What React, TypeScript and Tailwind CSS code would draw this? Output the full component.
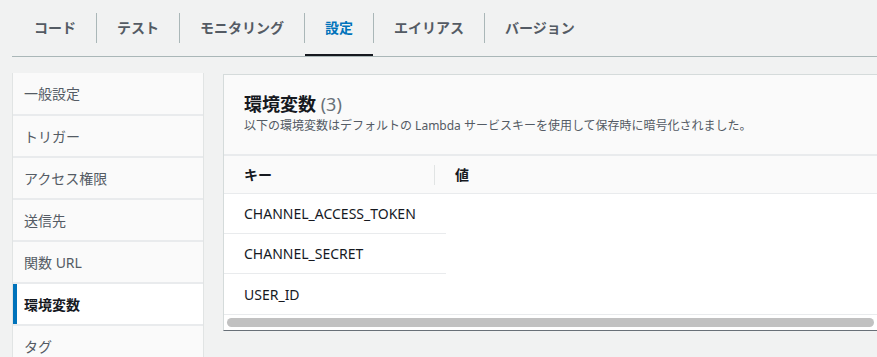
const tabs = ['コード', 'テスト', 'モニタリング', '設定', 'エイリアス', 'バージョン']
const activeTab = '設定'

const menu = ['一般設定', 'トリガー', 'アクセス権限', '送信先', '関数 URL', '環境変数', 'タグ']
const activeMenu = '環境変数'

const envVars = ['CHANNEL_ACCESS_TOKEN', 'CHANNEL_SECRET', 'USER_ID']

export default function App() {
  return (
    <div
      className="h-[357px] w-[877px] overflow-hidden bg-[#f1f2f2] text-[#16191f]"
      style={{ fontFamily: '"Noto Sans", "Noto Sans CJK JP", sans-serif' }}
    >
      {/* Tabs */}
      <div className="ml-3 flex h-[57px] border-b border-[#aab7b8] pl-[2px]">
        {tabs.map((t, i) => (
          <div key={t} className="relative flex h-[56px] items-center">
            {i > 0 && <div className="h-[30px] w-px bg-[#aab7b8]" />}
            <span
              className={`px-5 text-[14px] font-bold leading-none ${
                t === activeTab ? 'text-[#0073bb]' : 'text-[#545b64]'
              }`}
            >
              {t}
            </span>
            {t === activeTab && (
              <div className="absolute bottom-0 left-px right-0 h-[2px] bg-[#16191f]" />
            )}
          </div>
        ))}
      </div>

      <div className="mt-4 flex items-start gap-[19px] pl-3">
        {/* Side menu */}
        <div className="w-[192px] shrink-0 border-x border-[#e1e4e4] bg-[#fafafa]">
          {menu.map((m, i) => {
            const active = m === activeMenu
            return (
              <div
                key={m}
                className={`flex items-center ${
                  i > 0 ? 'h-[42px] border-t-2 border-[#e9ebed]' : 'h-[41px]'
                } ${active ? 'bg-white' : ''}`}
              >
                <div className={`h-full w-[4px] ${active ? 'bg-[#0073bb]' : ''}`} />
                <span
                  className={`pl-[7px] text-[14px] ${
                    active ? 'font-bold text-[#16191f]' : 'text-[#545b64]'
                  }`}
                >
                  {m}
                </span>
              </div>
            )
          })}
        </div>

        {/* Env vars card */}
        <div className="mt-px min-w-0 flex-1 border-l border-t border-[#d5dbdb] border-b border-b-[#687078] bg-white">
          <div className="border-b-2 border-[#e9ebed] bg-[#fafafa] px-5 pb-[19px] pt-[17px]">
            <h2 className="text-[18px] font-bold leading-[24px]">
              環境変数 <span className="font-normal text-[#687078]">(3)</span>
            </h2>
            <p className="mt-[1px] whitespace-nowrap text-[12px] leading-[18px] text-[#545b64]">
              以下の環境変数はデフォルトの Lambda サービスキーを使用して保存時に暗号化されました。
            </p>
          </div>

          <div className="flex h-[38px] items-center border-b border-[#e9ebed] bg-[#fafafa] text-[14px] font-bold">
            <div className="flex w-[211px] items-center border-r border-[#e1e4e4] py-[1px] pl-5">
              <span className="leading-[18px]">キー</span>
            </div>
            <span className="pl-5">値</span>
          </div>

          <div>
            {envVars.map((k, i) => (
              <div
                key={k}
                className={`flex h-[40px] w-[222px] items-center pl-5 text-[14px] ${
                  i < envVars.length - 1 ? 'border-b border-[#e9ebed]' : ''
                }`}
              >
                {k}
              </div>
            ))}
          </div>

          <div className="border-t border-[#e9ebed] px-[3px] pb-[3px] pt-[3px]">
            <div className="h-[9px] rounded-full bg-[#c1c1c1]" />
          </div>
        </div>
      </div>
    </div>
  )
}
